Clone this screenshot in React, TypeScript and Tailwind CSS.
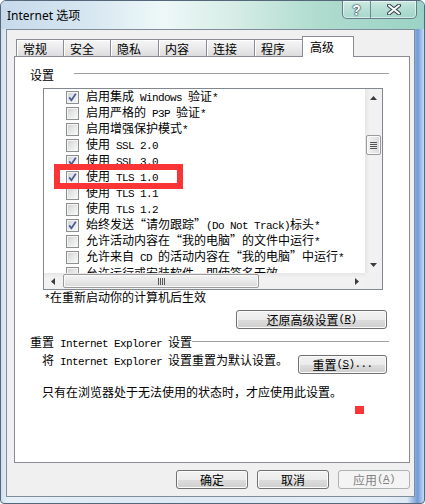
import React from "react";

const MONO = "font-['Liberation_Mono','DejaVu_Sans_Mono',monospace] text-[11px] tracking-[-0.6px]";

// SimSun-like mixing: ASCII runs are half width (6px), CJK runs 12px
function Mixed({ text }: { text: string }) {
  const parts = text.split(/([\x20-\x7e]+)/).filter(Boolean);
  return (
    <>
      {parts.map((p, i) =>
        /^[\x20-\x7e]+$/.test(p) ? (
          <span key={i} className={`${MONO} whitespace-pre`}>
            {p}
          </span>
        ) : (
          <span key={i}>{p}</span>
        )
      )}
    </>
  );
}

interface Option {
  label: string;
  checked: boolean;
}

const options: Option[] = [
  { label: "启用集成 Windows 验证*", checked: true },
  { label: "启用严格的 P3P 验证*", checked: false },
  { label: "启用增强保护模式*", checked: false },
  { label: "使用 SSL 2.0", checked: false },
  { label: "使用 SSL 3.0", checked: true },
  { label: "使用 TLS 1.0", checked: true },
  { label: "使用 TLS 1.1", checked: false },
  { label: "使用 TLS 1.2", checked: false },
  { label: "始终发送“请勿跟踪”(Do Not Track)标头*", checked: true },
  { label: "允许活动内容在“我的电脑”的文件中运行*", checked: false },
  { label: "允许来自 CD 的活动内容在“我的电脑”中运行*", checked: false },
  { label: "允许运行或安装软件，即使签名无效", checked: false },
];

const tabs = [
  { name: "常规", w: "w-[48px]" },
  { name: "安全", w: "w-[48px]" },
  { name: "隐私", w: "w-[49px]" },
  { name: "内容", w: "w-[49px]" },
  { name: "连接", w: "w-[49px]" },
  { name: "程序", w: "w-[49px]" },
];

function Checkbox({ on }: { on: boolean }) {
  return (
    <div className="relative w-[13px] h-[13px] shrink-0 border border-[#8e8f8f] bg-[#f4f4f4] p-[1px]">
      <div className="w-full h-full bg-[linear-gradient(135deg,#d2d4d6_0%,#e6e7e8_50%,#f7f7f7_100%)]" />
      {on && (
        <svg className="absolute inset-0" width="11" height="11" viewBox="0 0 11 11">
          <path d="M2.2 5.4 L4.4 8.2 L8.8 1.8" fill="none" stroke="#4a5a96" strokeWidth="1.7" />
        </svg>
      )}
    </div>
  );
}

function WinButton({
  children,
  className = "",
  disabled = false,
}: {
  children: React.ReactNode;
  className?: string;
  disabled?: boolean;
}) {
  return (
    <div
      className={`h-[19px] rounded-[3px] border flex items-center justify-center text-[12px] leading-none ${
        disabled
          ? "border-[#adb2b5] bg-[#f4f4f4] text-[#838383]"
          : "border-[#707070] bg-[linear-gradient(180deg,#f2f2f2_0%,#ebebeb_50%,#dddddd_51%,#cfcfcf_100%)] shadow-[inset_0_0_0_1px_#fbfbfb] text-black"
      } ${className}`}
    >
      {children}
    </div>
  );
}

function ScrollThumbV() {
  return (
    <div className="mx-[1px] h-[20px] rounded-[2px] border border-[#9a9a9a] bg-[linear-gradient(90deg,#f3f3f3_0%,#e8e8e8_50%,#d9d9d9_100%)] shadow-[inset_0_0_0_1px_#fafafa] flex flex-col items-center justify-center gap-[1px]">
      {[0, 1, 2, 3].map((i) => (
        <div key={i} className="w-[7px] h-[1px] bg-[#555]" />
      ))}
    </div>
  );
}

function ScrollThumbH() {
  return (
    <div className="h-[14px] w-[196px] rounded-[2px] border border-[#9a9a9a] bg-[linear-gradient(180deg,#f3f3f3_0%,#e8e8e8_50%,#d9d9d9_100%)] shadow-[inset_0_0_0_1px_#fafafa] flex items-center justify-center gap-[1px]">
      {[0, 1, 2, 3].map((i) => (
        <div key={i} className="w-[1px] h-[7px] bg-[#555]" />
      ))}
    </div>
  );
}

function Arrow({ dir }: { dir: "up" | "down" | "left" | "right" }) {
  const pts = {
    up: "0,4 7,4 3.5,0",
    down: "0,0 7,0 3.5,4",
    left: "4,0 4,7 0,3.5",
    right: "0,0 0,7 4,3.5",
  }[dir];
  const vertical = dir === "up" || dir === "down";
  return (
    <svg width={vertical ? 7 : 4} height={vertical ? 4 : 7} viewBox={vertical ? "0 0 7 4" : "0 0 4 7"}>
      <polygon points={pts} fill="#3c3c3c" />
    </svg>
  );
}

export default function App() {
  return (
    <div className="relative w-[425px] h-[504px] overflow-hidden flex flex-col rounded-t-[6px] rounded-b-[4px] border border-[#55677a] bg-[linear-gradient(90deg,#cfe0ee_0%,#e4eff7_1.5%,#dde9f3_40%,#e3edf6_90%,#dce8f4_96%,#6f9ad9_98.5%,#c9dbf0_100%)] font-['Noto_Sans_CJK_SC','Noto_Sans',sans-serif] text-black">
      {/* title bar */}
      <div className="h-[28px] flex items-start justify-between bg-[linear-gradient(90deg,#c6d9eb_0%,#d8e8f2_22%,#eef8f8_38%,#d6ede6_55%,#afdccf_75%,#9ad3c5_100%)]">
        <div className="pl-[6px] pt-[7px] text-[12px] leading-[16px] font-['Noto_Sans','Noto_Sans_CJK_SC',sans-serif] text-black">
          Internet 选项
        </div>
        <div className="flex mr-[7px] h-[19px] -mt-px rounded-b-[5px] border border-[#4f6275]/80 bg-[linear-gradient(180deg,rgba(255,255,255,0.45)_0%,rgba(255,255,255,0.2)_50%,rgba(170,215,210,0.35)_100%)] shadow-[inset_0_0_0_1px_rgba(255,255,255,0.55)] overflow-hidden">
          <div className="w-[28px] flex items-center justify-center border-r border-[#4f6275]/70 text-white font-bold text-[14px] leading-none font-['Liberation_Sans',sans-serif] [text-shadow:0_0_1px_#26384a,0_0_1px_#26384a,0_0_2px_#26384a]">
            ?
          </div>
          <div className="w-[45px] flex items-center justify-center">
            <svg width="14" height="11" viewBox="0 0 14 11">
              <path d="M2 1.5 L12 9.5 M12 1.5 L2 9.5" stroke="#33424f" strokeWidth="4" strokeLinecap="round" />
              <path d="M2 1.5 L12 9.5 M12 1.5 L2 9.5" stroke="#ffffff" strokeWidth="2" strokeLinecap="round" />
            </svg>
          </div>
        </div>
      </div>

      {/* frame + client */}
      <div className="flex-1 flex">
        <div className="w-[5px] shrink-0" />
        <div className="flex-1 flex flex-col border border-[#7f8d9b] bg-[#f0f0f0] pl-[7px] pr-[4px] pt-[6px]">
          {/* tabs */}
          <div className="h-[20px] flex items-end pl-[2px]">
            {tabs.map((t, i) => (
              <div
                key={t.name}
                className={`${t.w} h-[17px] ${i > 0 ? "-ml-px" : ""} border border-b-0 border-[#898c95] bg-[linear-gradient(180deg,#f6f6f6_0%,#ececec_45%,#dcdcdc_100%)] shadow-[inset_1px_1px_0_#fff] flex items-center pl-[6px] pt-[2px] text-[12px] leading-none`}
              >
                {t.name}
              </div>
            ))}
            <div className="relative z-10 -ml-px -mb-px w-[52px] h-[21px] border border-b-0 border-[#898c95] bg-white flex items-center pl-[7px] text-[12px] leading-none">
              高级
            </div>
          </div>

          {/* panel */}
          <div className="w-[396px] flex-1 border border-[#898c95] bg-white pl-[15px] pr-[20px] pt-[12px] text-[12px]">
            <div className="h-[12px] flex items-center leading-[12px]">
              <span>设置</span>
              <div className="flex-1 ml-[20px] h-px bg-[#a0a0a0] -mt-[3px]" />
            </div>

            {/* list box */}
            <div className="ml-[13px] mt-[7px] w-[340px] h-[202px] border border-[#828790] flex flex-col">
              <div className="flex h-[184px]">
                <div className="flex-1 min-w-0 [clip-path:inset(-4px_0_0_0)]">
                  {options.map((o) => (
                    <div key={o.label} className="h-[16px] flex items-center pl-[22px] gap-[7px] whitespace-nowrap leading-[16px]">
                      <Checkbox on={o.checked} />
                      <span>
                        <Mixed text={o.label} />
                      </span>
                    </div>
                  ))}
                </div>
                <div className="w-[17px] shrink-0 flex flex-col bg-[linear-gradient(90deg,#e6e6e6_0%,#f2f2f2_30%,#f0f0f0_100%)]">
                  <div className="h-[17px] flex items-center justify-center">
                    <Arrow dir="up" />
                  </div>
                  <div className="mt-[29px]">
                    <ScrollThumbV />
                  </div>
                  <div className="flex-1" />
                  <div className="h-[17px] flex items-center justify-center">
                    <Arrow dir="down" />
                  </div>
                </div>
              </div>
              <div className="flex h-[16px] relative z-10">
                <div className="flex-1 flex items-center bg-[linear-gradient(180deg,#e6e6e6_0%,#f2f2f2_30%,#f0f0f0_100%)]">
                  <div className="w-[17px] flex items-center justify-center">
                    <Arrow dir="left" />
                  </div>
                  <div className="ml-[2px]">
                    <ScrollThumbH />
                  </div>
                  <div className="flex-1" />
                  <div className="w-[17px] flex items-center justify-center">
                    <Arrow dir="right" />
                  </div>
                </div>
                <div className="w-[17px] bg-[#f0f0f0]" />
              </div>
            </div>

            <div className="ml-[14px] leading-[14px]">
              <Mixed text="*在重新启动你的计算机后生效" />
            </div>

            <div className="mt-[4px] flex justify-end">
              <WinButton className="w-[151px] mr-[2px]">
                还原高级设置<span className={MONO}>(<u>R</u>)</span>
              </WinButton>
            </div>

            <div className="mt-[8px] h-[12px] flex items-center leading-[12px] whitespace-nowrap">
              <span>
                <Mixed text="重置 Internet Explorer 设置" />
              </span>
              <div className="flex-1 h-px bg-[#a0a0a0] -mt-[3px]" />
            </div>

            <div className="mt-[5px] flex items-start">
              <div className="ml-[12px] leading-[12px] whitespace-nowrap">
                <Mixed text="将 Internet Explorer 设置重置为默认设置。" />
              </div>
              <div className="flex-1" />
              <WinButton className="w-[89px] mr-[2px] mt-[1px]">
                重置<span className={MONO}>(<u>S</u>)...</span>
              </WinButton>
            </div>

            <div className="mt-[12px] ml-[12px] leading-[12px]">只有在浏览器处于无法使用的状态时，才应使用此设置。</div>
          </div>

          {/* dialog buttons */}
          <div className="mt-[7px] mb-[7px] w-[396px] flex justify-end gap-[9px]">
            <WinButton className="w-[72px]">确定</WinButton>
            <WinButton className="w-[72px]">取消</WinButton>
            <WinButton className="w-[72px]" disabled>
              应用<span className={MONO}>(<u>A</u>)</span>
            </WinButton>
          </div>
        </div>
        <div className="w-[9px] shrink-0" />
      </div>
      <div className="h-[6px]" />

      {/* red annotations */}
      <div className="absolute left-[53px] top-[163px] w-[129px] h-[25px] border-[6px] border-[#fb3535]" />
      <div className="absolute left-[354px] top-[405px] w-[9px] h-[8px] bg-[#fb3535]" />
    </div>
  );
}
